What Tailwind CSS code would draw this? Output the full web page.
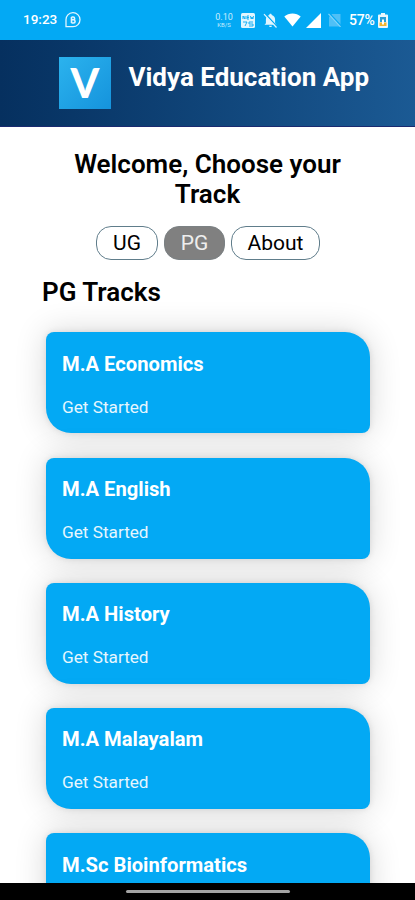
<!DOCTYPE html>
<html lang="en">
<head>
<meta charset="utf-8">
<meta name="viewport" content="width=device-width, initial-scale=1">
<title>Vidya Education App</title>
<script src="https://cdn.jsdelivr.net/npm/@tailwindcss/browser@4"></script>
</head>
<body class="h-[900px] w-[415px] overflow-hidden bg-white font-['Roboto',sans-serif] text-black">
<div class="flex h-[900px] flex-col overflow-hidden">
  <!-- Status bar -->
  <div class="flex h-10 shrink-0 items-center bg-[#03a9f4] pl-[23px] text-white">
    <span class="w-[35px] text-[13.5px] leading-none font-medium whitespace-nowrap">19:23</span>
    <svg class="ml-[7px] h-4 w-4" viewBox="0 0 16 16" fill="none" stroke="#e1f5fe" stroke-width="1.3"><path d="M1 14.5V8a7 7 0 1 1 7 6.7H1z"/><path d="M6.5 5v6M6.5 5h1.700a1.400 1.400 0 0 1 0 2.800H6.5h2a1.600 1.600 0 0 1 0 3.200h-2" stroke-width="1.600"/></svg>
    <div class="ml-[134px] flex w-[18px] flex-col items-center text-[#c9edfd]">
      <span class="text-[9px] leading-[9px] whitespace-nowrap">0.10</span>
      <span class="text-[6px] leading-[6px] whitespace-nowrap">KB/S</span>
    </div>
    <svg class="ml-2 h-[15px] w-[14px]" viewBox="0 0 14 15"><rect width="14" height="15" rx="1.5" fill="#e1f5fe"/><path d="M2 3v3M2 3l2 3V3M6 3v3M6 3h2M6 4.500h2M6 6h2M9.500 3l.7 3 .8-2 .8 2 .7-3M2 9h4l-2 4M8 9h4M8 11h4M8 13h4M8 9v2M12 11v2" fill="none" stroke="#03a9f4" stroke-width=".9"/></svg>
    <svg class="ml-2 h-[15px] w-[15px]" viewBox="0 0 15 15"><path d="M7.500.8c.8 0 1.200.5 1.200 1.300 2.300.6 3.400 2.400 3.400 4.600v3.600l1.400 1.500H1.500l1.400-1.500V6.700c0-2.200 1.100-4 3.400-4.600C6.300 1.300 6.700.8 7.500.8zM6 12.800h3c0 1.700-3 1.700-3 0z" fill="#e1f5fe"/><path d="M2.200.8l12 13" stroke="#03a9f4" stroke-width="1.400"/><path d="M1 1.200l12.500 13.300" stroke="#e1f5fe" stroke-width="1.200"/></svg>
    <svg class="ml-[6px] h-[14px] w-[17px]" viewBox="0 0 17 14"><path d="M.3 3.500C4.800-.5 12.200-.5 16.700 3.500L8.500 13.600z" fill="#fff"/></svg>
    <svg class="ml-[5px] h-[15px] w-[15px]" viewBox="0 0 15 15"><path d="M15 0v15H0z" fill="#fff"/></svg>
    <svg class="ml-[7px] h-[14px] w-[13px]" viewBox="0 0 13 14"><path d="M4 1h8.500v12.500H1V4z" fill="#4fc0f6"/><path d="M1.500.5l11.500 12.500" stroke="#03a9f4" stroke-width="1.600"/><path d="M.5.8l12 13" stroke="#81d4fa" stroke-width="1.200"/></svg>
    <span class="ml-[8px] w-[27px] text-[14px] leading-none font-medium tracking-[-0.2px] whitespace-nowrap">57%</span>
    <svg class="ml-[2px] h-[15px] w-[10px]" viewBox="0 0 10 15"><path d="M3 0h4v1.500h2a1 1 0 0 1 1 1V14a1 1 0 0 1-1 1H1a1 1 0 0 1-1-1V2.500a1 1 0 0 1 1-1h2z" fill="#e8f7fd"/><path d="M2 4h6v5H2z" fill="#29a0d8"/><path d="M1.500 9.500h7V13h-7z" fill="#f3b52d"/><path d="M4 6.500h2v5H4z" fill="#fff"/></svg>
  </div>
  <!-- App header -->
  <header class="flex h-[87px] shrink-0 items-start border-b border-[#1a2a70] bg-linear-to-r from-[#06305f] to-[#1b5a94] pt-[17px] pl-[59px] text-white">
    <div class="flex h-[52px] w-[52px] items-center justify-center bg-linear-to-br from-[#2bb3ee] to-[#1593dc] font-['Lato',sans-serif] text-[41px] leading-none font-black"><span class="-translate-y-px">V</span></div>
    <h1 class="mt-[4px] ml-[17.500px] text-[26px] leading-8 font-bold whitespace-nowrap">Vidya Education App</h1>
  </header>
  <!-- Track selection -->
  <main class="flex min-h-0 flex-1 flex-col overflow-hidden">
    <h2 class="mt-[22px] w-[415px] shrink-0 text-center text-[26px] leading-[30px] font-semibold">Welcome, Choose your<br>Track</h2>
    <div class="mt-[17px] flex shrink-0 gap-[6px] pl-24 text-[21px]">
      <div class="flex h-[34px] w-[62px] items-center justify-center rounded-[15px] border border-[#607d8b] pt-[2px]">UG</div>
      <div class="flex h-[34px] w-[61px] items-center justify-center rounded-[15px] border border-[#7b8184] bg-[#808080] pt-[2px] text-[#eee]">PG</div>
      <div class="flex h-[34px] w-[89px] items-center justify-center rounded-[15px] border border-[#607d8b] pt-[2px]">About</div>
    </div>
    <h3 class="mt-[17px] shrink-0 pl-[42px] text-[26px] leading-[30px] font-semibold">PG Tracks</h3>
    <div class="mt-[25.400px] ml-[45.5px] flex w-[324.500px] flex-col gap-[24.200px] text-white">
      <div class="h-[101px] shrink-0 rounded-tl-[8px] rounded-tr-[25px] rounded-br-[8px] rounded-bl-[25px] bg-[#03a9f4] pt-[19.500px] pl-[16.500px] shadow-[0_0_6px_rgba(0,0,0,0.1),0_0_32px_rgba(0,0,0,0.16)]"><h4 class="text-[20.200px] leading-6 font-bold">M.A Economics</h4><p class="mt-[21px] text-[17.200px] leading-5 text-[#e6f6fe]">Get Started</p></div>
      <div class="h-[101px] shrink-0 rounded-tl-[8px] rounded-tr-[25px] rounded-br-[8px] rounded-bl-[25px] bg-[#03a9f4] pt-[19.500px] pl-[16.500px] shadow-[0_0_6px_rgba(0,0,0,0.1),0_0_32px_rgba(0,0,0,0.16)]"><h4 class="text-[20.200px] leading-6 font-bold">M.A English</h4><p class="mt-[21px] text-[17.200px] leading-5 text-[#e6f6fe]">Get Started</p></div>
      <div class="h-[101px] shrink-0 rounded-tl-[8px] rounded-tr-[25px] rounded-br-[8px] rounded-bl-[25px] bg-[#03a9f4] pt-[19.500px] pl-[16.500px] shadow-[0_0_6px_rgba(0,0,0,0.1),0_0_32px_rgba(0,0,0,0.16)]"><h4 class="text-[20.200px] leading-6 font-bold">M.A History</h4><p class="mt-[21px] text-[17.200px] leading-5 text-[#e6f6fe]">Get Started</p></div>
      <div class="h-[101px] shrink-0 rounded-tl-[8px] rounded-tr-[25px] rounded-br-[8px] rounded-bl-[25px] bg-[#03a9f4] pt-[19.500px] pl-[16.500px] shadow-[0_0_6px_rgba(0,0,0,0.1),0_0_32px_rgba(0,0,0,0.16)]"><h4 class="text-[20.200px] leading-6 font-bold">M.A Malayalam</h4><p class="mt-[21px] text-[17.200px] leading-5 text-[#e6f6fe]">Get Started</p></div>
      <div class="h-[101px] shrink-0 rounded-tl-[8px] rounded-tr-[25px] rounded-br-[8px] rounded-bl-[25px] bg-[#03a9f4] pt-[19.500px] pl-[16.500px] shadow-[0_0_6px_rgba(0,0,0,0.1),0_0_32px_rgba(0,0,0,0.16)]"><h4 class="text-[20.200px] leading-6 font-bold">M.Sc Bioinformatics</h4></div>
    </div>
  </main>
  <!-- Gesture navigation -->
  <div class="flex h-[17px] shrink-0 items-start justify-center bg-black pt-[7px]"><div class="h-[3px] w-[164px] rounded-full bg-[#a3a3a3]"></div></div>
</div>
</body>
</html>
